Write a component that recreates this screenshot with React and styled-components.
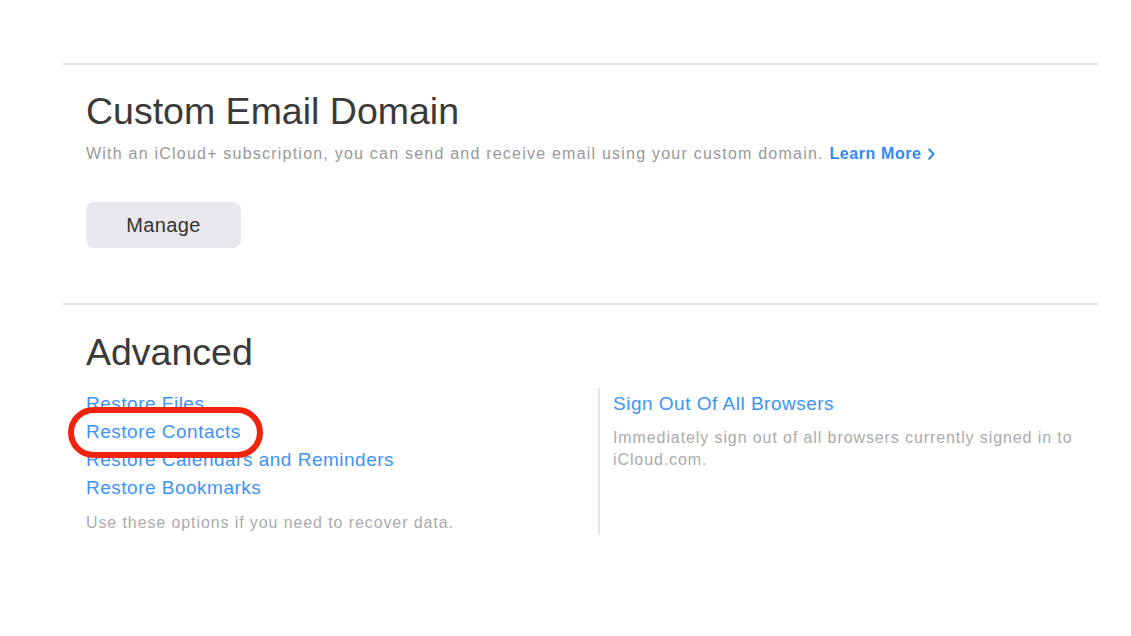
import styled, { createGlobalStyle } from "styled-components";

const GlobalStyle = createGlobalStyle`
    body {
        margin: 0;
        background: #ffffff;
        font-family: "Liberation Sans", Arial, sans-serif;
    }
`;

export default function App() {
    return (
        <Page>
            <GlobalStyle />
            <Section>
                <Title>Custom Email Domain</Title>
                <Subtitle>
                    With an iCloud+ subscription, you can send and receive email using your custom domain.{" "}
                    <LearnMore>
                        Learn More
                        <Chevron viewBox="0 0 7 12">
                            <path d="M1.2 1.2 L5.6 6 L1.2 10.8" />
                        </Chevron>
                    </LearnMore>
                </Subtitle>
                <ManageButton>Manage</ManageButton>
            </Section>
            <Section last>
                <Title>Advanced</Title>
                <Columns>
                    <LeftColumn>
                        <LinkList>
                            <Link>Restore Files</Link>
                            <Link>
                                <Highlighted>
                                    Restore Contacts
                                    <Oval />
                                </Highlighted>
                            </Link>
                            <Link>Restore Calendars and Reminders</Link>
                            <Link>Restore Bookmarks</Link>
                        </LinkList>
                        <Hint>Use these options if you need to recover data.</Hint>
                    </LeftColumn>
                    <RightColumn>
                        <Link>Sign Out Of All Browsers</Link>
                        <RightHint>Immediately sign out of all browsers currently signed in to iCloud.com.</RightHint>
                    </RightColumn>
                </Columns>
            </Section>
        </Page>
    );
}

const Page = styled.div`
    width: 1035px;
    margin-left: 63px;
    padding-top: 63px;
`;

const Section = styled.section`
    border-top: 2px solid #e2e2e2;
    padding: ${({ last }) => (last ? "26px 23px 40px" : "25px 23px 55px")};
`;

const Title = styled.h2`
    margin: 0;
    font-size: 37.5px;
    line-height: 43px;
    font-weight: 400;
    color: #3a3a3a;
`;

const Subtitle = styled.p`
    margin: 10px 0 0;
    font-size: 16px;
    line-height: 22px;
    color: #999999;
    letter-spacing: 1.22px;
`;

const LearnMore = styled.span`
    color: #2f8af5;
    font-weight: 700;
    letter-spacing: 0.6px;
    white-space: nowrap;
`;

const Chevron = styled.svg`
    width: 7px;
    height: 12px;
    margin-left: 6px;
    vertical-align: -1px;
    fill: none;
    stroke: #2f8af5;
    stroke-width: 2;
    stroke-linecap: round;
    stroke-linejoin: round;
`;

const ManageButton = styled.button`
    margin-top: 37px;
    width: 155px;
    height: 46px;
    border: none;
    border-radius: 8px;
    background: #e8e8ed;
    font-family: "Liberation Sans", Arial, sans-serif;
    font-size: 20px;
    letter-spacing: 0.4px;
    color: #333333;
`;

const Columns = styled.div`
    display: flex;
    margin-top: 16px;
`;

const LeftColumn = styled.div`
    width: 512px;
    flex-shrink: 0;
`;

const RightColumn = styled.div`
    flex: 1;
    border-left: 2px solid #e6e6e6;
    margin-top: -2px;
    padding: 2px 0 18px 13px;
`;

const LinkList = styled.div`
    display: flex;
    flex-direction: column;
`;

const Link = styled.div`
    font-size: 19px;
    line-height: 28px;
    letter-spacing: 0.5px;
    color: #3d94f6;
`;

const Highlighted = styled.span`
    position: relative;
`;

const Oval = styled.span`
    position: absolute;
    left: -18px;
    top: -14px;
    width: 183px;
    height: 39px;
    border: 6px solid #f2230d;
    border-radius: 26px;
`;

const Hint = styled.p`
    margin: 10px 0 0;
    font-size: 16px;
    line-height: 22px;
    letter-spacing: 0.9px;
    color: #ababab;
`;

const RightHint = styled(Hint)`
    margin-top: 9px;
    max-width: 470px;
`;
